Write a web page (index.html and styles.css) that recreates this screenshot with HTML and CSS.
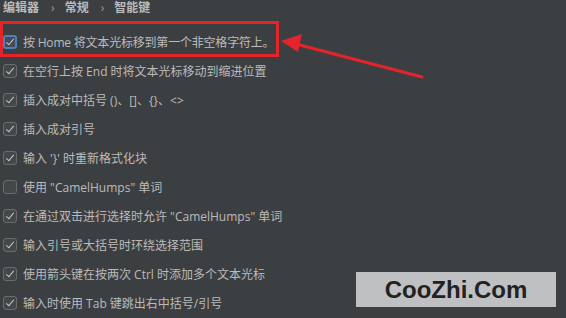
FILE: index.html
```html
<!DOCTYPE html>
<html lang="zh-CN">
<head>
<meta charset="utf-8">
<link rel="stylesheet" href="styles.css">
</head>
<body>
<div class="page">
  <div class="crumbs">
    <span class="crumb">编辑器</span><span class="sep">›</span><span class="crumb">常规</span><span class="sep">›</span><span class="crumb">智能键</span>
  </div>
  <ul class="opts">
    <li class="opt"><span class="cb checked focus"></span><span class="lbl tight">按 Home 将文本光标移到第一个非空格字符上。</span></li>
    <li class="opt"><span class="cb checked"></span><span class="lbl">在空行上按 End 时将文本光标移动到缩进位置</span></li>
    <li class="opt"><span class="cb checked"></span><span class="lbl">插入成对中括号 ()、[]、{}、&lt;&gt;</span></li>
    <li class="opt"><span class="cb checked"></span><span class="lbl">插入成对引号</span></li>
    <li class="opt"><span class="cb checked"></span><span class="lbl">输入 '}' 时重新格式化块</span></li>
    <li class="opt"><span class="cb"></span><span class="lbl">使用 "CamelHumps" 单词</span></li>
    <li class="opt"><span class="cb checked"></span><span class="lbl">在通过双击进行选择时允许 "CamelHumps" 单词</span></li>
    <li class="opt"><span class="cb checked"></span><span class="lbl">输入引号或大括号时环绕选择范围</span></li>
    <li class="opt"><span class="cb checked"></span><span class="lbl">使用箭头键在按两次 Ctrl 时添加多个文本光标</span></li>
    <li class="opt"><span class="cb checked"></span><span class="lbl">输入时使用 Tab 键跳出右中括号/引号</span></li>
  </ul>
  <div class="highlight"></div>
  <svg class="arrow" width="566" height="318" viewBox="0 0 566 318">
    <line x1="422" y1="77" x2="296" y2="44" stroke="#e3242b" stroke-width="3" stroke-linecap="round"/>
    <polygon points="281,41 302,34 298,52" fill="#e3242b"/>
  </svg>
  <div class="watermark">CooZhi.Com</div>
</div>
</body>
</html>
```
FILE: styles.css
```css
html, body {
  margin: 0;
  padding: 0;
  background: #3c3f41;
}
.page {
  position: relative;
  width: 566px;
  height: 318px;
  overflow: hidden;
  font-family: "Open Sans", "Noto Sans CJK SC", sans-serif;
  color: #bbbbbb;
}
.crumbs {
  display: flex;
  align-items: center;
  height: 14px;
  padding-top: 1px;
  padding-left: 3px;
  margin-bottom: 12px;
  font-size: 12px;
  font-weight: 700;
  line-height: 14px;
}
.sep {
  color: #9a9a9a;
  font-weight: 400;
  margin: 0 10px 0 12px;
}
.opts {
  list-style: none;
  margin: 0;
  padding: 0;
}
.opt {
  display: flex;
  align-items: center;
  height: 29px;
  padding-left: 3px;
  gap: 6px;
  font-size: 12px;
  white-space: nowrap;
}
.lbl.tight {
  letter-spacing: -0.2px;
}
.cb {
  position: relative;
  box-sizing: border-box;
  width: 14px;
  height: 14px;
  border: 1px solid #6a6c6c;
  border-radius: 3px;
  background: #43494a;
  flex: none;
}
.cb.checked::after {
  content: "";
  position: absolute;
  left: 4px;
  top: 1px;
  width: 3px;
  height: 7px;
  border-right: 1.6px solid #c8c8c8;
  border-bottom: 1.6px solid #c8c8c8;
  transform: rotate(40deg);
}
.cb.focus {
  border: 2px solid #4d7fb8;
  background: #3f4b57;
}
.cb.focus::after {
  left: 3px;
  top: 0px;
}
.highlight {
  position: absolute;
  left: 0;
  top: 21px;
  width: 279px;
  height: 36px;
  box-sizing: border-box;
  border: 3px solid #e3242b;
}
.arrow {
  position: absolute;
  left: 0;
  top: 0;
}
.watermark {
  position: absolute;
  left: 356px;
  top: 272px;
  width: 200px;
  height: 35px;
  background: #bfc0c1;
  color: #222222;
  font-family: "Liberation Sans", Arial, sans-serif;
  font-weight: 700;
  font-size: 24px;
  display: flex;
  align-items: center;
  justify-content: center;
}
```
